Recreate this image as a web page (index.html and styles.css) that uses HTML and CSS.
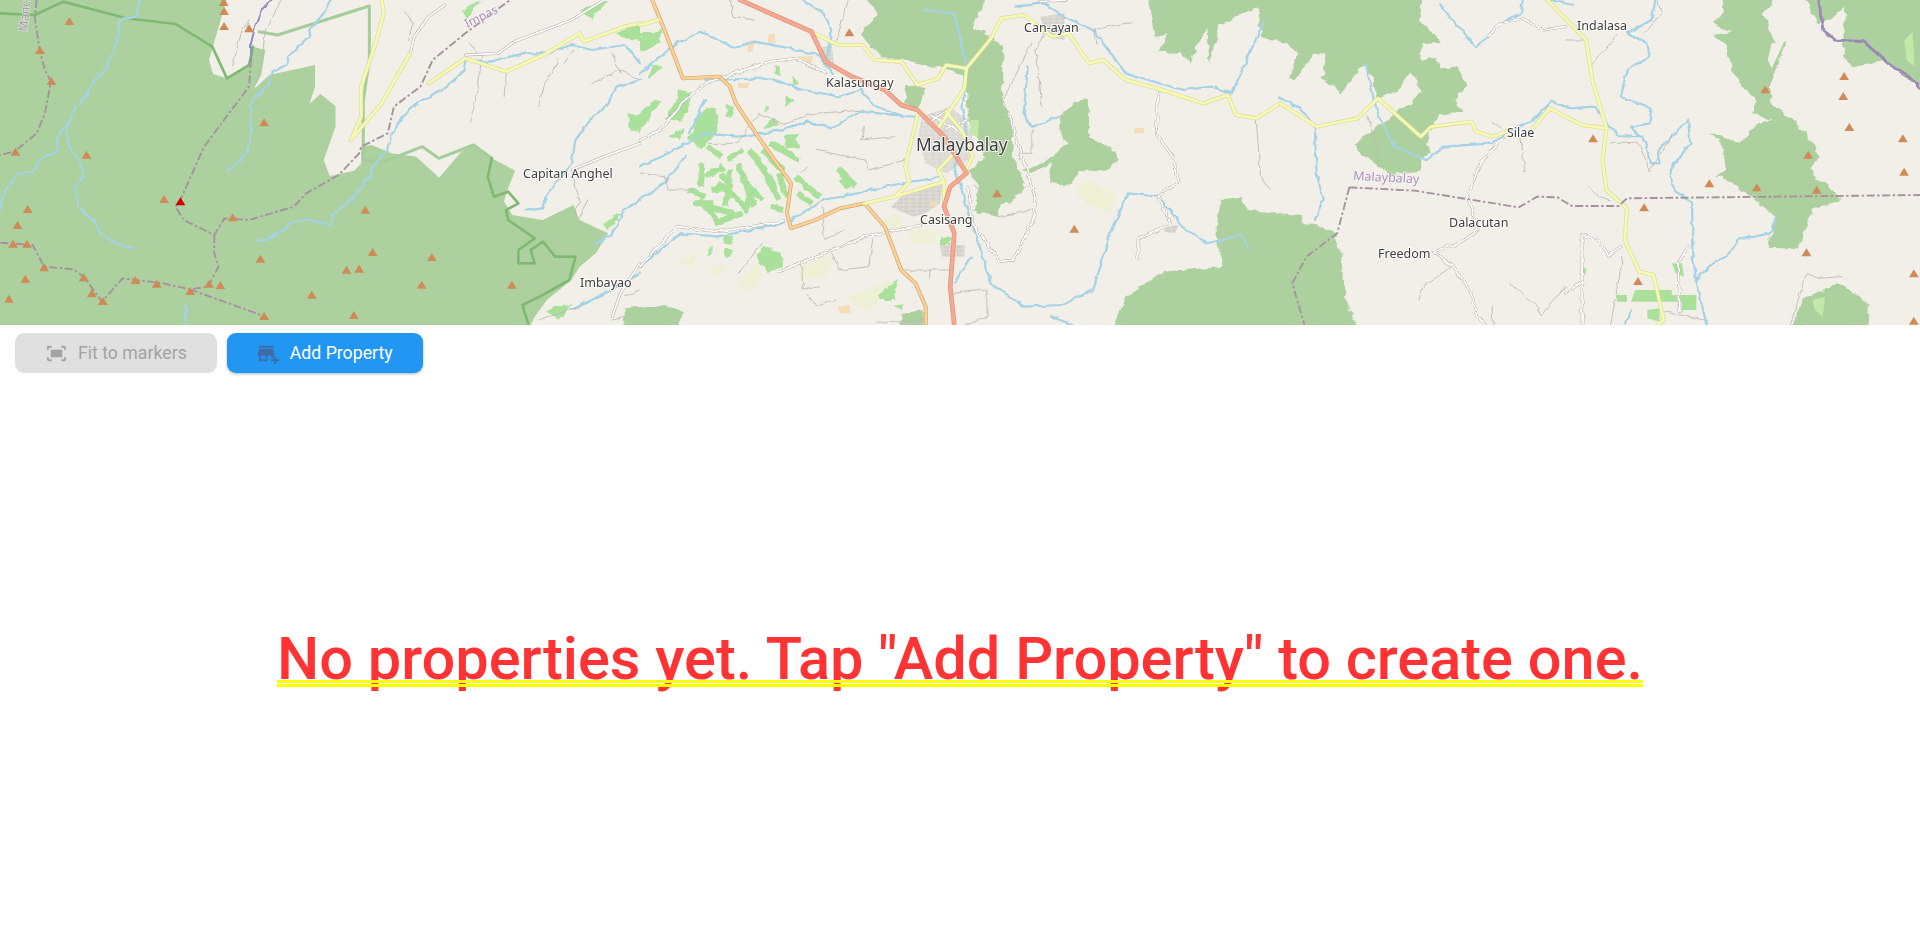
FILE: index.html
```html
<!DOCTYPE html>
<html lang="en">
<head>
<meta charset="utf-8">
<title>Properties</title>
<link rel="stylesheet" href="styles.css">
</head>
<body>
<div class="page">
  <div class="map-wrap">
    <svg class="map" viewBox="0 0 1920 325" preserveAspectRatio="none" xmlns="http://www.w3.org/2000/svg">
      <defs>
        <filter id="wig" filterUnits="userSpaceOnUse" x="-80" y="-80" width="1760" height="1140" color-interpolation-filters="sRGB">
          <feTurbulence type="fractalNoise" baseFrequency=".04" numOctaves="2" seed="4"/>
          <feDisplacementMap in="SourceGraphic" scale="20" xChannelSelector="R" yChannelSelector="G"/>
        </filter>
        <filter id="wig-soft" filterUnits="userSpaceOnUse" x="-80" y="-80" width="1760" height="1140" color-interpolation-filters="sRGB">
          <feTurbulence type="fractalNoise" baseFrequency=".05" numOctaves="1" seed="9"/>
          <feDisplacementMap in="SourceGraphic" scale="14" xChannelSelector="R" yChannelSelector="G"/>
        </filter>
        <pattern id="town" width="16" height="12" patternUnits="userSpaceOnUse">
          <rect width="16" height="12" fill="#d4d1cc"/>
          <path class="town-line" d="M0,3 H16 M6,0 V12"/>
        </pattern>
        <path id="pk" d="M0,-12 L12,12 L-12,12 Z"/>
        <path id="t1" d="M245,0 L420,95 L455,185 L520,230 L600,270 L640,315 L680,330 L745,410 L800,520 L760,560 L745,620 L770,700 L760,860 L770,975"/>
        <path id="o1" d="M30,0 L60,90 L105,235 L195,230 L220,260 L235,310 L295,420 L370,550 L360,640 L370,685 L430,660 L490,625 L550,610 L600,680 L640,810 L675,850 L700,920 L700,975"/>
        <path id="y0" d="M935,0 L940,40 L920,130 L885,260 L885,350 L860,420 L935,310 L1005,160 M1050,250 L1140,175 L1240,215 L1340,160 L1420,100 L1430,125 L1530,80 L1568,70"/>
        <path id="y1" d="M0,75 L45,60 M420,95 L485,135 L545,135 L575,180 L640,185 L680,255 L730,235 L750,195 L800,205 L860,115 L885,55 L940,45 L1010,110 L1050,100 L1100,190 L1135,180 L1190,240 L1280,270 L1380,310 L1440,285 L1460,345 L1510,355 L1568,310 M800,205 L795,265 L730,385 M680,345 L650,500 L660,545 L625,590 L550,610 M625,590 L745,545 M750,335 L790,395 L815,470 L800,505 M770,460 L730,510 L745,545 L745,620"/>
        <path id="y2" d="M0,310 L90,380 L190,355 L240,295 L345,410 L370,380 L470,365 L480,395 L520,410 L555,395 M620,385 L660,325 L740,375 L800,385 L790,480 L800,570 L850,625 L845,720 L880,815 L915,825 L940,960 L925,975 M655,0 L750,120 L765,240 L800,385"/>
        <path id="w0" d="M1090,15 L1050,50 L1015,110 L1005,160 M1140,165 L1220,160 L1260,125 L1400,60 L1480,0 M1410,505 L1480,470 L1568,430 M1500,950 L1520,880 L1568,790"/>
        <path id="w1" d="M0,420 L50,390 L110,300 L160,250 L315,185 L380,175 L455,220 M0,800 L90,680 L190,695 L350,665 M340,815 L550,710 L690,675 M805,560 L815,670 L880,785 L915,780 L965,650 L970,600 L905,350 M1270,280 L1265,400 L1305,470 L1320,545 L1270,590 L1300,670 L1220,720 L1220,775 M980,5 L1050,0 M705,370 L760,325 M715,345 L790,400 M740,390 L800,360 M750,410 L770,470"/>
        <path id="w2" d="M510,110 L540,70 L595,55 L645,90 L700,80 M555,400 L490,490 L460,590 L485,690 L440,730 L375,755 L420,795 L470,880 L480,940 L505,975 M740,705 L780,720 L805,765 L835,740 M740,705 L740,975 M700,880 L740,845 M1000,740 L975,790 L980,935"/>
      </defs>

      <!-- west panel -->
      <g transform="scale(.40816 .33333)">
        <path class="forest" d="M0,0 L555,0 L512,180 L522,222 L556,235 L610,195 L620,140 L650,150 L640,225 L620,270 L660,225 L772,195 L772,260 L758,312 L785,282 L822,318 L822,380 L793,480 L808,528 L868,512 L885,490 L885,440 L910,435 L960,460 L1020,470 L1076,533 L1130,455 L1160,435 L1205,475 L1262,512 L1240,580 L1235,605 L1255,645 L1330,660 L1405,615 L1420,660 L1490,700 L1460,760 L1420,800 L1400,840 L1340,900 L1310,950 L1300,975 L0,975 Z"/>
        <path class="farm wiggly" d="M1420,30 L1490,0 L1450,60 Z M1130,30 L1180,0 L1140,60 Z M1540,340 L1568,340 L1568,400 L1540,390 Z M1510,100 L1568,70 L1568,130 Z M1340,930 L1400,910 L1370,960 Z M1480,670 L1530,630 L1490,690 Z"/>
        <path class="park" d="M0,40 L85,45 L155,5 L310,55 L430,72 L520,140 L556,235 L610,195 L620,140"/>
        <path class="park-soft" d="M635,95 L680,105 L905,18 L905,180 L890,300 L890,480 L940,485 L1035,440 L1075,475 L1160,435 L1205,475"/>
        <path class="park" d="M1205,475 L1195,530 L1210,590 L1245,575 L1270,610 L1240,630 L1245,660 L1310,715 L1270,750 L1270,790 L1310,790 L1300,750 L1330,725 L1360,770 L1410,770 L1395,840 L1330,885 L1280,915 L1295,975"/>
        <path class="river wiggly-s" d="M340,0 L335,50 L295,60 L290,110 L270,170 L265,200 L230,240 L215,285 L185,320 L165,375 L140,410 L140,455 L100,475 L80,515 L45,520 L15,565 L0,630 M165,380 L165,430 L200,495 L205,530 L185,560 L190,620 L235,670 L245,700 L305,742 L325,742 M810,0 L800,30 L765,80 L755,110 L715,160 L700,195 L670,215 L650,265 L615,310 L615,390 L605,460 L560,512 M628,725 L665,712 L715,670 L750,657 L810,675 L815,645 L860,600 L905,530 L920,490 L950,450 L960,400 L985,350 L1035,300 L1090,265 L1135,215 L1140,180 L1200,185 L1280,160 L1340,160 L1400,135 L1450,150 L1530,135 L1568,190 M1290,632 L1330,625 L1345,575 L1400,490 L1410,420 L1440,370 L1490,310 L1510,260 L1568,240 M1460,735 L1500,700 L1530,630 L1568,600 M455,915 L455,975 M1400,930 L1450,900 L1568,820"/>
        <path class="minor wiggly-s" d="M690,0 L650,90 L640,200 L620,270 M570,200 L590,100 L610,60 M990,30 L1010,70 L1000,130 M1150,130 L1180,170 L1170,280 L1150,370 M1240,220 L1235,290 M1370,180 L1330,260 L1320,320 M1450,250 L1520,210 L1568,240 M1405,150 L1380,190 M1400,510 L1420,600 L1410,640 M1440,600 L1420,650 M1500,160 L1520,220 M1540,950 L1500,960 M1320,960 L1420,920 M1530,890 L1568,870"/>
        <use href="#w0" class="road-case"/><use href="#w0" class="road"/>
        <use href="#y0" class="yel-case"/><use href="#y0" class="yel"/>
        <path class="bound" d="M90,0 L85,50 L97,150 L110,210 L125,245 L110,340 L90,400 L35,455 L0,465 M615,180 L610,260 L500,440 L442,600 L430,620 L450,660 L525,705 L550,655 L610,660 L720,620 L750,580 L830,525 L880,460 L885,440 L950,400 L965,320 L1030,260 L1060,180 L1140,100 L1250,0 M525,705 L525,760 L535,800 L510,860 L465,868 L400,850 L300,835 L250,905 L205,830 L180,808 L108,800 L80,735 L0,728 M465,868 L650,950"/>
        <path class="admin-thin wiggly-s" d="M665,0 L640,30 L625,80 L615,130 L615,180"/>
        <g class="peaks">
          <use href="#pk" x="170" y="63"/><use href="#pk" x="98" y="150"/><use href="#pk" x="126" y="243"/><use href="#pk" x="38" y="455"/><use href="#pk" x="212" y="464"/><use href="#pk" x="68" y="627"/><use href="#pk" x="43" y="675"/><use href="#pk" x="32" y="731"/><use href="#pk" x="66" y="731"/><use href="#pk" x="108" y="802"/><use href="#pk" x="62" y="836"/><use href="#pk" x="22" y="896"/><use href="#pk" x="205" y="832"/><use href="#pk" x="225" y="880"/><use href="#pk" x="252" y="903"/><use href="#pk" x="332" y="840"/><use href="#pk" x="384" y="851"/><use href="#pk" x="466" y="873"/><use href="#pk" x="512" y="851"/><use href="#pk" x="540" y="855"/><use href="#pk" x="647" y="948"/><use href="#pk" x="764" y="884"/><use href="#pk" x="867" y="945"/><use href="#pk" x="638" y="776"/><use href="#pk" x="849" y="809"/><use href="#pk" x="880" y="806"/><use href="#pk" x="913" y="756"/><use href="#pk" x="1058" y="771"/><use href="#pk" x="1033" y="854"/><use href="#pk" x="1254" y="854"/><use href="#pk" x="895" y="629"/><use href="#pk" x="570" y="652"/><use href="#pk" x="402" y="597"/><use href="#pk" x="647" y="367"/><use href="#pk" x="548" y="6"/><use href="#pk" x="549" y="33"/><use href="#pk" x="549" y="78"/><use href="#pk" x="610" y="85"/>
        </g>
        <use href="#pk" x="442" y="604" class="peak-red"/>
      </g>

      <!-- centre panel -->
      <g transform="translate(640 0) scale(.40816 .33333)">
        <path class="forest wiggly" d="M525,-40 L855,-40 L815,85 L855,105 L890,140 L890,300 L910,380 L915,480 L950,560 L885,625 L878,650 L820,635 L830,555 L805,520 L845,470 L805,360 L795,230 L740,205 L680,190 L640,180 L590,170 L540,100 L585,40 Z"/>
        <path class="forest wiggly" d="M650,255 L700,260 L680,330 L650,310 Z M1065,305 L1100,300 L1100,410 L1165,455 L1170,480 L1140,515 L1075,510 L1060,555 L1005,550 L1010,490 L960,520 L935,510 L990,490 L1050,430 L1030,410 L1030,350 Z M1240,-40 L1620,-40 L1620,130 L1568,130 L1525,110 L1510,25 L1420,75 L1395,190 L1390,80 L1345,190 L1330,160 L1270,155 L1290,100 L1260,110 Z M1140,1020 L1190,890 L1280,815 L1430,800 L1410,690 L1420,600 L1470,590 L1490,630 L1620,645 L1620,1020 Z M-40,925 L60,915 L110,940 L70,1020 L-40,1020 Z M640,940 L695,930 L695,1020 L640,1020 Z"/>
        <path class="orchard" d="M810,360 L830,360 L828,410 L808,405 Z"/>
        <path class="pale wiggly" d="M1060,550 L1110,545 L1170,590 L1150,640 L1090,610 Z M390,800 L470,770 L460,830 L395,840 Z M240,840 L290,790 L300,830 L260,880 Z M500,900 L610,840 L640,860 L560,930 Z M600,650 L640,640 L640,680 L610,690 Z M660,690 L730,690 L720,730 L670,730 Z M95,790 L140,760 L130,800 Z M175,800 L210,795 L200,825 L178,825 Z"/>
        <path class="farm wiggly" d="M0,100 L55,90 L50,130 L0,155 Z M0,340 L40,295 L50,305 L15,370 L0,390 Z M60,360 L100,270 L130,280 L100,365 Z M30,195 L60,200 L20,235 Z M120,420 L150,330 L185,320 L190,390 L150,445 Z M70,410 L110,380 L100,420 Z M210,315 L230,320 L225,350 L210,350 Z M330,195 L345,200 L345,230 L330,225 Z M365,225 L392,250 L380,258 Z M355,405 L385,402 L388,440 L360,445 Z M285,765 L300,740 L350,760 L350,800 L315,820 Z M205,710 L225,710 L225,735 L205,730 Z M165,745 L185,740 L160,770 Z M205,750 L225,750 L225,770 L208,770 Z M735,710 L760,710 L760,735 L735,735 Z M585,880 L630,840 L625,900 L590,900 Z M620,915 L640,910 L640,930 Z M305,315 L320,330 L305,340 Z M360,290 L380,300 L355,320 Z M300,380 L330,355 L335,380 Z"/>
        <path class="farm-strip wiggly-s" d="M120,570 L160,590 M150,490 L150,560 M145,600 L190,660 M165,620 L230,640 M180,670 L250,640 M190,550 L260,620 M240,490 L280,620 M250,540 L300,600 M270,450 L330,560 M215,480 L250,450 M300,450 L350,510 M320,430 L390,480 M340,520 L360,590 M380,530 L440,590 M385,580 L420,610 M320,620 L350,630 M485,505 L530,560 M495,535 L510,565 M300,500 L340,600 M200,520 L230,590 M160,530 L205,500 M165,440 L200,470 M220,510 L210,620 M175,570 L230,560 M130,610 L180,610 M270,560 L260,640"/>
        <path class="urban" d="M615,620 L640,590 L700,565 L740,555 L735,610 L700,640 L670,650 L640,635 Z M735,735 L795,735 L795,770 L740,770 Z M440,145 L470,135 L475,190 L445,180 Z M1285,680 L1320,675 L1310,700 L1285,695 Z M980,50 L1040,40 L1040,120 L1000,110 Z"/>
        <path class="urban-soft" d="M690,350 L760,320 L800,360 L820,440 L805,480 L750,520 L700,490 L680,420 Z"/>
        <path class="patch" d="M265,125 L285,120 L275,155 L263,155 Z M315,105 L330,100 L332,130 L313,130 Z M390,170 L425,168 L420,190 L395,190 Z M240,250 L268,248 L265,265 L240,265 Z M1210,385 L1235,385 L1235,400 L1210,400 Z M485,920 L515,915 L515,940 L490,940 Z M710,605 L730,605 L725,620 L712,620 Z"/>
        <path class="river wiggly-s" d="M0,220 L90,130 L150,95 L230,145 L280,125 L345,140 L440,165 L470,220 M160,240 L320,235 L400,270 L490,290 L540,270 L580,320 L650,350 M0,500 L100,440 L160,400 L240,410 L330,395 L410,365 L470,385 L540,335 L670,350 M0,600 L60,550 L110,470 M120,400 L160,300 M370,660 L450,600 L530,580 L620,555 L740,530 M0,800 L100,700 L190,710 L350,670 M695,30 L770,40 L800,190 L790,330 L800,400 L770,500 L790,580 L830,730 L860,850 L940,920 L1030,915 L1110,870 L1150,710 L1195,580 L1270,590 L1330,680 L1390,730 L1475,705 L1490,745 M400,0 L450,40 L470,90 L455,190 M920,20 L990,10 L1040,50 L1110,90 L1190,220 L1330,270 L1400,260 L1450,280 L1530,60 M950,200 L940,340 L960,380 L1025,350 M770,850 L810,770 M1010,950 L1060,975"/>
        <path class="minor wiggly-s" d="M220,0 L230,50 L280,60 M480,130 L500,40 L510,0 M0,520 L60,530 L70,570 L130,570 M165,430 L240,430 L290,340 L350,370 L430,340 L550,330 M430,450 L550,480 L560,510 L650,480 M390,520 L410,500 M550,380 L540,420 L625,410 M450,620 L450,720 L500,690 M470,760 L490,810 L560,800 L570,720 M395,790 L400,870 L440,860 M240,820 L300,730 M640,810 L770,810 M710,810 L710,830 M760,880 L850,870 L850,950 L800,975 M410,880 L430,920 L480,900 M580,970 L700,960 M1120,130 L1110,90 L1205,65 M960,390 L960,460 L930,460 L930,480 M985,320 L970,150 L990,100 M900,340 L890,300 L960,130 M1510,360 L1520,530 L1545,570 M820,555 L880,650 L960,630"/>
        <g class="wiggly-s"><use href="#w1" class="road-case"/><use href="#w1" class="road"/></g>
        <use href="#o1" class="org-case"/><use href="#o1" class="org"/>
        <use href="#y1" class="yel-case"/><use href="#y1" class="yel"/>
        <use href="#t1" class="trk-case"/><use href="#t1" class="trk"/>
        <g class="peaks"><use href="#pk" x="513" y="97"/><use href="#pk" x="875" y="580"/><use href="#pk" x="1064" y="686"/></g>
      </g>

      <!-- east panel -->
      <g transform="translate(1280 0) scale(.40816 .33333)">
        <path class="forest wiggly" d="M-40,90 L-40,-40 L350,-40 L340,60 L395,125 L345,130 L345,185 L385,170 L395,205 L430,200 L460,255 L425,300 L450,335 L385,345 L360,430 L370,460 L350,470 L345,515 L270,525 L235,490 L190,450 L185,430 L225,395 L290,330 L320,310 L345,280 L320,215 L290,270 L240,295 L215,195 L190,205 L175,240 L150,280 L105,235 L115,160 L85,160 L40,235 L25,230 L40,160 L0,90 Z"/>
        <path class="forest wiggly" d="M-40,635 L130,690 L150,760 L155,860 L195,1020 L-40,1020 Z M1075,-40 L1240,-40 L1185,40 L1215,135 L1240,120 L1205,240 L1200,300 L1290,400 L1320,470 L1300,510 L1375,600 L1300,630 L1285,710 L1270,745 L1195,740 L1215,650 L1150,590 L1085,530 L1065,530 L1090,510 L1080,430 L1055,400 L1130,430 L1170,370 L1205,360 L1160,340 L1165,300 L1120,240 L1085,125 L1060,105 L1110,95 L1060,70 L1085,40 Z M1275,-40 L1620,-40 L1620,300 L1568,260 L1480,180 L1400,200 L1385,170 L1380,115 L1385,20 L1345,60 L1320,70 L1300,30 Z M1240,1020 L1280,900 L1370,850 L1400,875 L1445,915 L1440,1020 Z"/>
        <path class="orchard" d="M1530,120 L1550,95 L1555,200 L1535,180 Z M1305,900 L1335,890 L1330,950 L1310,930 Z"/>
        <path class="patch-gap" d="M1205,130 L1235,125 L1205,205 L1195,180 Z"/>
        <path class="farm" d="M825,885 L850,885 L850,905 L825,905 Z M860,905 L870,870 L960,870 L960,885 L1020,885 L1020,930 L980,930 L975,905 L860,905 Z M900,930 L930,925 L930,965 L900,955 Z M960,790 L985,790 L990,830 L970,820 Z M740,805 L750,805 L750,820 L740,820 Z"/>
        <path class="river wiggly-s" d="M0,295 L50,325 L85,380 L90,520 L105,600 L85,660 M210,190 L230,300 L240,340 L280,440 L360,480 L400,440 L520,430 L550,400 L620,360 L665,305 L710,325 L770,320 L800,370 L830,405 L890,410 L910,490 L930,490 L925,450 L1000,360 L1005,430 L955,510 L965,570 L1010,610 L1010,760 L1020,840 L1045,975 M390,10 L480,145 L540,70 L590,40 L595,0 M660,0 L720,15 M920,0 L910,60 L850,100 L900,130 L905,170 L850,210 L835,290 L910,325 L905,370 L860,380 L880,410 M1020,840 L1050,800 L1100,760 L1120,720 L1200,700 L1215,650 M845,975 L860,930"/>
        <path class="minor wiggly-s" d="M215,350 L240,440 L240,500 M520,365 L555,395 M590,410 L600,515 M755,560 L780,590 L810,600 M565,850 L630,920 L640,950 L700,860 M340,900 L350,860 L420,800 M520,920 L520,975 M1250,975 L1290,820 L1320,835 L1375,830 M810,430 L880,430 L905,515 L965,400 M810,975 L840,770 M940,935 L1040,960 M700,120 L745,120 M760,200 L830,100 M925,0 L935,40 L890,100"/>
        <g class="wiggly-s"><use href="#w2" class="road-case"/><use href="#w2" class="road"/></g>
        <use href="#y2" class="yel-case"/><use href="#y2" class="yel"/>
        <path class="bound" d="M170,562 L330,572 L585,622 L630,590 L680,592 L715,618 L830,618 L850,595 L1568,585 M170,562 L140,700 L65,770 L30,850 L60,975"/>
        <path class="admin wiggly-s" d="M1320,0 L1330,90 L1360,120 L1430,125 L1490,190 L1540,230 L1568,265"/>
        <g class="peaks"><use href="#pk" x="767" y="415"/><use href="#pk" x="892" y="622"/><use href="#pk" x="877" y="843"/><use href="#pk" x="1052" y="550"/><use href="#pk" x="1168" y="562"/><use href="#pk" x="1315" y="569"/><use href="#pk" x="1294" y="464"/><use href="#pk" x="1189" y="268"/><use href="#pk" x="1382" y="228"/><use href="#pk" x="1380" y="288"/><use href="#pk" x="1395" y="381"/><use href="#pk" x="1526" y="415"/><use href="#pk" x="1529" y="515"/><use href="#pk" x="1290" y="757"/><use href="#pk" x="1553" y="820"/><use href="#pk" x="1553" y="962"/></g>
      </g>

      <text class="place" x="523" y="178">Capitan Anghel</text>
      <text class="place" x="580" y="287">Imbayao</text>
      <text class="place" x="826" y="87">Kalasungay</text>
      <text class="place place-lg" x="916" y="151">Malaybalay</text>
      <text class="place" x="1024" y="32">Can-ayan</text>
      <text class="place" x="920" y="224">Casisang</text>
      <text class="place" x="1577" y="30">Indalasa</text>
      <text class="place" x="1507" y="137">Silae</text>
      <text class="place" x="1449" y="227">Dalacutan</text>
      <text class="place" x="1378" y="258">Freedom</text>
      <text class="admin-label" transform="translate(1353 180) rotate(3)">Malaybalay</text>
      <text class="admin-label admin-label-sm" transform="translate(467 28) rotate(-26)">Impas</text>
      <text class="admin-label admin-label-sm" transform="translate(27 32) rotate(-84)">Manc</text>
    </svg>
  </div>

  <div class="toolbar">
    <button class="btn btn-muted" type="button">
      <svg class="icon icon-fit" viewBox="0 0 24 24" xmlns="http://www.w3.org/2000/svg"><path d="M17 4h3c1.1 0 2 .9 2 2v2h-2V6h-3V4zM4 8V6h3V4H4c-1.1 0-2 .9-2 2v2h2zm16 8v2h-3v2h3c1.1 0 2-.9 2-2v-2h-2zM7 18H4v-2H2v2c0 1.1.9 2 2 2h3v-2zM18 8H6v8h12V8z"/></svg>
      <span>Fit to markers</span>
    </button>
    <button class="btn btn-primary" type="button">
      <svg class="icon icon-add" viewBox="0 0 24 24" xmlns="http://www.w3.org/2000/svg"><path d="M15 17h2v-3h1v-2l-1-5H2l-1 5v2h1v6h9v-6h4v3zM9 18H4v-4h5v4zM2 4h15v2H2V4zm18 14v-3h-2v3h-3v2h3v3h2v-3h3v-2h-3z"/></svg>
      <span>Add Property</span>
    </button>
  </div>

  <main class="empty">
    <p class="empty-text">No properties yet. Tap "Add Property" to create one.</p>
  </main>
</div>
</body>
</html>
```
FILE: styles.css
```css
* { box-sizing: border-box; }
html, body { margin: 0; height: 100%; background: #fff; }
body { font-family: Roboto, "Liberation Sans", sans-serif; }
.page { display: flex; flex-direction: column; height: 100vh; overflow: hidden; }

.map-wrap { height: 325px; flex: none; overflow: hidden; background: #f2efe9; }
.map { display: block; width: 100%; height: 100%; filter: blur(.6px); }
.map path { fill: none; stroke-linejoin: round; stroke-linecap: round; vector-effect: non-scaling-stroke; }
#pk { fill: inherit; stroke: none; }
.map .wiggly { filter: url(#wig); }
.map .wiggly-s { filter: url(#wig-soft); }
.map .forest { fill: #add19e; stroke: none; }
.map .farm { fill: #a9e19a; stroke: none; }
.map .farm-strip { stroke: #a9e19a; stroke-width: 6; stroke-linecap: butt; }
.map .orchard { fill: #c4e8a8; stroke: none; }
.map .pale { fill: #eef0d5; stroke: none; }
.map .urban { fill: url(#town); stroke: none; }
.map .urban-soft { fill: url(#town); stroke: none; opacity: .75; }
.map .town-line { stroke: #f0eeea; stroke-width: 1; }
.map .patch { fill: #f3dcb8; stroke: none; }
.map .patch-gap { fill: #f2efe9; stroke: none; }
.map .park { stroke: #7fb873; stroke-width: 2.6; }
.map .park-soft { stroke: #a5cd9c; stroke-width: 3; }
.map .river { stroke: #a5d3e6; stroke-width: 2.2; }
.map .minor { stroke: #bdb9b3; stroke-width: .9; }
.map .road-case { stroke: #b5b1ab; stroke-width: 2.8; }
.map .road { stroke: #fff; stroke-width: 1.7; }
.map .yel-case { stroke: #d6d78f; stroke-width: 4; }
.map .yel { stroke: #f6f8b6; stroke-width: 2.9; }
.map .org-case { stroke: #d4a263; stroke-width: 3.9; }
.map .org { stroke: #fad19a; stroke-width: 2.6; }
.map .trk-case { stroke: #dc8f7c; stroke-width: 4.6; }
.map .trk { stroke: #f6a98f; stroke-width: 3.3; }
.map .bound { stroke: #a6929f; stroke-width: 1.9; stroke-dasharray: 8 2.5 2.5 2.5; stroke-linecap: butt; }
.map .admin { stroke: #9d8bb5; stroke-width: 3; }
.map .admin-thin { stroke: #8e8fc0; stroke-width: 2; }

.map .peaks use { fill: #cf8a58; }
.map .peak-red { fill: #d40000; }

.place {
  font-family: "Noto Sans", sans-serif;
  font-size: 12.5px;
  fill: #3d3d3d;
  stroke: rgba(255, 255, 255, .85);
  stroke-width: 2px;
  paint-order: stroke;
}
.place-lg { font-size: 17.3px; }
.admin-label {
  font-family: "Noto Sans", sans-serif;
  font-size: 12.5px;
  fill: #ae8fb8;
  stroke: rgba(255, 255, 255, .5);
  stroke-width: 1.5px;
  paint-order: stroke;
}
.admin-label-sm { font-size: 12px; }

.toolbar { display: flex; flex: none; gap: 10px; padding: 8px 15px 7px; }
.btn {
  display: flex;
  align-items: center;
  gap: 10px;
  height: 40px;
  padding: 0 30px;
  border: 0;
  border-radius: 9px;
  font: 400 17.7px Roboto, sans-serif;
}
.btn-muted { background: #e0e0e0; color: #a3a3a3; }
.btn-primary { background: #2196f3; color: #fff; box-shadow: 0 1px 3px rgba(0, 0, 0, .3); }
.icon { display: block; flex: none; width: 23px; height: 23px; }
.icon-fit { fill: #a3a3a3; }
.icon-add { fill: #3f6ca5; }

.empty { flex: 1; display: flex; align-items: center; justify-content: center; padding-top: 4px; }
.empty-text {
  position: relative;
  margin: 0;
  font-size: 59.5px;
  font-weight: 500;
  line-height: 70px;
  color: #ff3333;
}
.empty-text::after {
  content: "";
  position: absolute;
  left: 0;
  right: 0;
  top: 56px;
  height: 1px;
  box-sizing: content-box;
  border-top: 3px solid #ffff00;
  border-bottom: 3px solid #ffff00;
}
```
